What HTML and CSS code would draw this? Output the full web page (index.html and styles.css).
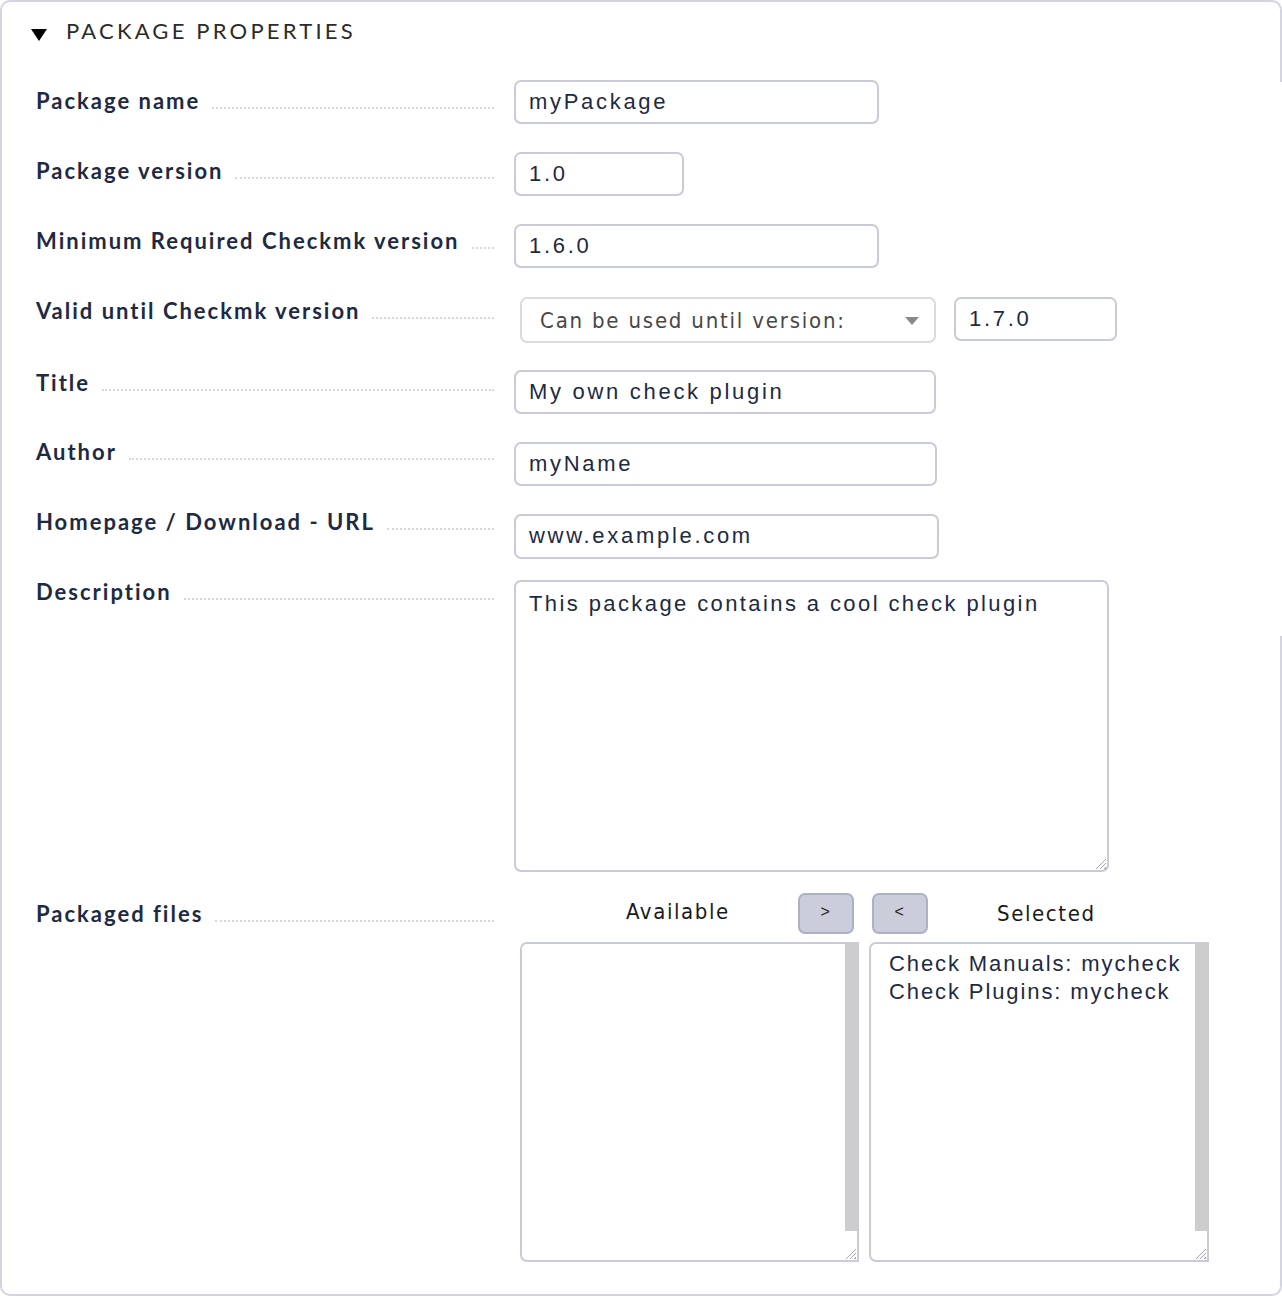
FILE: index.html
```html
<!DOCTYPE html>
<html>
<head>
<meta charset="utf-8">
<link rel="stylesheet" href="styles.css">
</head>
<body>
<div class="box">
  <div class="head">
    <svg class="tri" width="16" height="12" viewBox="0 0 16 12"><polygon points="0,0 16,0 8,12" fill="#000"/></svg>
    <span class="title">PACKAGE PROPERTIES</span>
  </div>
  <div class="form">
    <div class="row r1">
      <div class="lbl"><span class="txt">Package name</span><span class="dots"></span></div>
      <div class="val"><div class="input w-name">myPackage</div></div>
    </div>
    <div class="row r2">
      <div class="lbl"><span class="txt">Package version</span><span class="dots"></span></div>
      <div class="val"><div class="input w-ver">1.0</div></div>
    </div>
    <div class="row r3">
      <div class="lbl"><span class="txt">Minimum Required Checkmk version</span><span class="dots"></span></div>
      <div class="val"><div class="input w-name">1.6.0</div></div>
    </div>
    <div class="row r4">
      <div class="lbl"><span class="txt">Valid until Checkmk version</span><span class="dots"></span></div>
      <div class="val val-inline">
        <div class="select"><span>Can be used until version:</span>
          <svg width="14" height="8" viewBox="0 0 14 8"><polygon points="0,0 14,0 7,8" fill="#8a8a8a"/></svg>
        </div>
        <div class="input w-until">1.7.0</div>
      </div>
    </div>
    <div class="row r5">
      <div class="lbl"><span class="txt">Title</span><span class="dots"></span></div>
      <div class="val"><div class="input w-title">My own check plugin</div></div>
    </div>
    <div class="row r6">
      <div class="lbl"><span class="txt">Author</span><span class="dots"></span></div>
      <div class="val"><div class="input w-author">myName</div></div>
    </div>
    <div class="row r7">
      <div class="lbl"><span class="txt">Homepage / Download - URL</span><span class="dots"></span></div>
      <div class="val"><div class="input w-url">www.example.com</div></div>
    </div>
    <div class="row r8">
      <div class="lbl"><span class="txt">Description</span><span class="dots"></span></div>
      <div class="val"><div class="textarea">This package contains a cool check plugin<span class="grip"></span></div></div>
    </div>
    <div class="row r9">
      <div class="lbl"><span class="txt">Packaged files</span><span class="dots"></span></div>
      <div class="val">
        <div class="dual-head">
          <span class="avail">Available</span>
          <span class="btn btn-add">&gt;</span>
          <span class="btn btn-rem">&lt;</span>
          <span class="sel">Selected</span>
        </div>
        <div class="dual-lists">
          <div class="list list-left"><span class="scroll"></span><span class="grip"></span></div>
          <div class="list list-right">
            <div class="opt">Check Manuals: mycheck</div>
            <div class="opt">Check Plugins: mycheck</div>
            <span class="scroll"></span><span class="grip"></span>
          </div>
        </div>
      </div>
    </div>
  </div>
</div>
</body>
</html>
```

FILE: styles.css
```css
* { box-sizing: border-box; }
html, body { margin: 0; padding: 0; background: #fff; }
body { width: 1282px; height: 1296px; overflow: hidden; }

.box {
  position: relative;
  width: 1282px;
  height: 1296px;
  border: 2px solid #d3d4df;
  border-radius: 10px;
  background: #fff;
}
.box::after {
  content: "";
  position: absolute;
  right: -2px;
  top: 80px;
  width: 2px;
  height: 554px;
  background: #fff;
}

.head {
  display: flex;
  align-items: center;
  padding: 16px 0 36px 29px;
  height: 78px;
}
.tri { margin-top: 8px; }
.title {
  margin-left: 19px;
  font-family: "Lato", sans-serif;
  font-size: 22px;
  letter-spacing: 3.2px;
  line-height: 26px;
  color: #2b2b2b;
}

.form { padding-left: 34px; }
.row { display: flex; align-items: flex-start; }
.lbl {
  width: 458px;
  display: flex;
  align-items: flex-end;
  height: 24px;
  flex-shrink: 0;
}
.txt {
  font-family: "Lato", sans-serif;
  font-weight: 700;
  font-size: 22px;
  letter-spacing: 2px;
  line-height: 24px;
  color: #1e2a42;
  white-space: nowrap;
}
.dots {
  flex: 1;
  margin: 0 0 4px 12px;
  border-bottom: 2px dotted #d6d8df;
}
.val { margin-left: 20px; }
.val-inline { display: flex; align-items: flex-start; }

.r1 { margin-bottom: 28px; }
.r1 .lbl { margin-top: 9px; }
.r2 { margin-bottom: 28px; }
.r2 .lbl { margin-top: 7px; }
.r3 { margin-bottom: 29px; }
.r3 .lbl { margin-top: 5px; }
.r4 { margin-bottom: 27px; }
.r4 .lbl { margin-top: 2px; }
.r5 { margin-bottom: 26px; }
.r5 .lbl { margin-top: 1px; }
.r6 { margin-bottom: 24px; }
.r6 .val { margin-top: 2px; }
.r7 { margin-bottom: 21px; }
.r7 .val { margin-top: 4px; }
.r7 .input { height: 45px; }
.r8 { margin-bottom: 21px; }
.r8 .lbl { margin-top: 0; }
.r9 .lbl { margin-top: 9px; }

.input {
  height: 44px;
  border: 2px solid #cacbd8;
  border-radius: 7px;
  padding: 0 0 0 13px;
  font-family: "Liberation Sans", Arial, sans-serif;
  font-size: 22px;
  letter-spacing: 2.7px;
  line-height: 40px;
  color: #1e2a42;
  white-space: nowrap;
}
.w-name { width: 365px; }
.w-ver { width: 170px; }
.w-title { width: 422px; }
.w-author { width: 423px; }
.w-url { width: 425px; }
.w-until { width: 163px; margin-left: 18px; }

.select {
  margin-left: 6px;
  width: 416px;
  height: 46px;
  border: 2px solid #d9dae2;
  border-radius: 7px;
  display: flex;
  align-items: center;
  justify-content: space-between;
  padding: 0 15px 0 18px;
  font-family: "DejaVu Sans Condensed", "DejaVu Sans", sans-serif;
  font-stretch: condensed;
  font-size: 22px;
  letter-spacing: 1.8px;
  color: #474747;
}
.select svg { margin-top: 2px; }

.textarea {
  position: relative;
  width: 595px;
  height: 292px;
  border: 2px solid #cacbd8;
  border-radius: 7px;
  padding: 9px 0 0 13px;
  font-family: "Liberation Sans", Arial, sans-serif;
  font-size: 22px;
  letter-spacing: 2.4px;
  line-height: 26px;
  color: #1e2a42;
}
.grip {
  position: absolute;
  right: 1px;
  bottom: 1px;
  width: 11px;
  height: 11px;
  background: repeating-linear-gradient(135deg, transparent 0 2px, #a8a8a8 2px 3px);
  clip-path: polygon(100% 0, 100% 100%, 0 100%);
}

.dual-head {
  display: flex;
  align-items: center;
  height: 41px;
  font-family: "DejaVu Sans Condensed", "DejaVu Sans", sans-serif;
  font-stretch: condensed;
  font-size: 22px;
  letter-spacing: 1.6px;
  color: #1a1a1a;
}
.avail { width: 284px; padding-left: 112px; margin-top: -4px; }
.btn {
  width: 56px;
  height: 41px;
  border: 2px solid #aeb1c6;
  border-radius: 7px;
  background: #cbcdda;
  display: flex;
  align-items: center;
  justify-content: center;
  font-family: "Liberation Sans", Arial, sans-serif;
  font-size: 16px;
  color: #222;
  padding-bottom: 3px;
  flex-shrink: 0;
}
.btn-rem { margin-left: 18px; }
.sel { margin-left: 69px; }

.dual-lists { display: flex; margin-top: 8px; margin-left: 6px; }
.list {
  position: relative;
  height: 320px;
  border: 2px solid #cacbd8;
  border-radius: 7px 0 0 7px;
  padding: 6px 0 0 18px;
}
.list-left { width: 339px; }
.list-right { width: 340px; margin-left: 10px; }
.scroll {
  position: absolute;
  right: 0;
  top: -2px;
  width: 12px;
  height: 289px;
  background: #cdcdcd;
}
.opt {
  font-family: "Liberation Sans", Arial, sans-serif;
  font-size: 22px;
  letter-spacing: 1.9px;
  line-height: 28px;
  color: #1e2a42;
  white-space: nowrap;
}
```
